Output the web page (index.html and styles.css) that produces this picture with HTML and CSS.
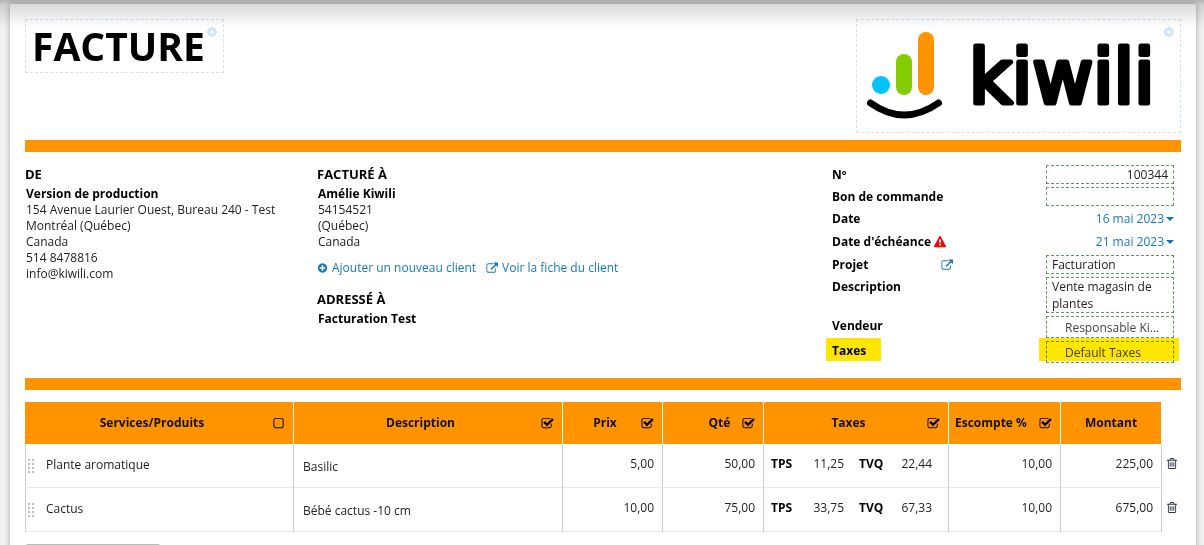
FILE: index.html
```html
<!DOCTYPE html>
<html lang="fr">
<head>
<meta charset="utf-8">
<title>Facture</title>
<link rel="stylesheet" href="styles.css">
</head>
<body>
<svg class="sprite" aria-hidden="true">
  <symbol id="cog" viewBox="0 0 1792 1792"><path d="M1152 896q0-106-75-181t-181-75-181 75-75 181 75 181 181 75 181-75 75-181zm512-109v222q0 12-8 23t-20 13l-185 28q-19 54-39 91 35 50 107 138 10 12 10 25t-9 23q-27 37-99 108t-94 71q-12 0-26-9l-138-108q-44 23-91 38-16 136-29 186-7 28-36 28h-222q-14 0-24.500-8.500t-11.500-21.500l-28-184q-49-16-90-37l-141 107q-10 9-25 9-14 0-25-11-126-114-165-168-7-10-7-23 0-12 8-23 15-21 51-66.500t54-70.500q-27-50-41-99l-183-27q-13-2-21-12.500t-8-23.500v-222q0-12 8-23t19-13l186-28q14-46 39-92-40-57-107-138-10-12-10-24 0-10 9-23 26-36 98.500-107.500t94.500-71.500q13 0 26 10l138 107q44-23 91-38 16-136 29-186 7-28 36-28h222q14 0 24.500 8.500t11.500 21.500l28 184q49 16 90 37l142-107q9-9 24-9 13 0 25 10 129 119 165 170 7 8 7 22 0 12-8 23-15 21-51 66.500t-54 70.500q26 50 41 98l183 28q13 2 21 12.500t8 23.500z"/></symbol>
  <symbol id="plus" viewBox="0 0 1792 1792"><path d="M1344 960v-128q0-26-19-45t-45-19h-256v-256q0-26-19-45t-45-19h-128q-26 0-45 19t-19 45v256h-256q-26 0-45 19t-19 45v128q0 26 19 45t45 19h256v256q0 26 19 45t45 19h128q26 0 45-19t19-45v-256h256q26 0 45-19t19-45zm320-64q0 209-103 385.500t-279.500 279.500-385.500 103-385.500-103-279.500-279.500-103-385.500 103-385.500 279.500-279.500 385.500-103 385.500 103 279.500 279.500 103 385.500z"/></symbol>
  <symbol id="external" viewBox="0 0 1792 1792"><path d="M1472 992v320q0 119-84.500 203.500t-203.500 84.500h-832q-119 0-203.500-84.500t-84.500-203.500v-832q0-119 84.500-203.500t203.500-84.500h704q14 0 23 9t9 23v64q0 14-9 23t-23 9h-704q-66 0-113 47t-47 113v832q0 66 47 113t113 47h832q66 0 113-47t47-113v-320q0-14 9-23t23-9h64q14 0 23 9t9 23zm320-864v512q0 26-19 45t-45 19-45-19l-176-176-652 652q-10 10-23 10t-23-10l-114-114q-10-10-10-23t10-23l652-652-176-176q-19-19-19-45t19-45 45-19h512q26 0 45 19t19 45z"/></symbol>
  <symbol id="warning" viewBox="0 0 1792 1792"><path d="M1024 1375v-190q0-14-9.500-23.500t-22.500-9.500h-192q-13 0-22.500 9.500t-9.500 23.500v190q0 14 9.500 23.500t22.500 9.500h192q13 0 22.500-9.500t9.500-23.500zm-2-374l18-459q0-12-10-19-13-11-24-11h-220q-11 0-24 11-10 7-10 21l17 457q0 10 10 16.500t24 6.500h185q14 0 23.500-6.500t10.500-16.500zm-14-934l768 1408q35 63-2 126-17 29-46.500 46t-63.500 17h-1536q-34 0-63.500-17t-46.500-46q-37-63-2-126l768-1408q17-31 47-49t65-18 65 18 47 49z"/></symbol>
  <symbol id="trash" viewBox="192 128 1408 1536"><path d="M704 736v576q0 14-9 23t-23 9h-64q-14 0-23-9t-9-23v-576q0-14 9-23t23-9h64q14 0 23 9t9 23zm256 0v576q0 14-9 23t-23 9h-64q-14 0-23-9t-9-23v-576q0-14 9-23t23-9h64q14 0 23 9t9 23zm256 0v576q0 14-9 23t-23 9h-64q-14 0-23-9t-9-23v-576q0-14 9-23t23-9h64q14 0 23 9t9 23zm128 724v-948h-896v948q0 22 7 40.500t14.500 27 10.500 8.500h832q3 0 10.500-8.500t14.500-27 7-40.500zm-672-1076h448l-48-117q-7-9-17-11h-317q-10 2-17 11zm928 32v64q0 14-9 23t-23 9h-96v948q0 83-47 143.500t-113 60.500h-832q-66 0-113-58.500t-47-141.500v-952h-96q-14 0-23-9t-9-23v-64q0-14 9-23t23-9h309l70-167q15-37 54-63t79-26h320q40 0 79 26t54 63l70 167h309q14 0 23 9t9 23z"/></symbol>
  <symbol id="grip" viewBox="0 0 6 14"><path d="M0 0h2v2H0zM4 0h2v2H4zM0 4h2v2H0zM4 4h2v2H4zM0 8h2v2H0zM4 8h2v2H4zM0 12h2v2H0zM4 12h2v2H4z"/></symbol>
</svg>
<div class="page">
  <main class="sheet">
    <header class="top">
      <div class="editable title-box">
        <h1>FACTURE</h1>
        <button class="gear" type="button" aria-label="Modifier le titre"><svg><use href="#cog"/></svg></button>
      </div>
      <div class="editable logo-box">
        <svg class="logo" viewBox="0 0 323 112" role="img" aria-label="kiwili">
          <circle cx="24" cy="65" r="9" fill="#00c3ff"/>
          <rect x="39" y="34" width="16" height="41" rx="8" fill="#84cc00"/>
          <rect x="61" y="12" width="16" height="63" rx="8" fill="#ff9400"/>
          <path d="M13.500 83Q47 107 81.500 83" fill="none" stroke="#000" stroke-width="7" stroke-linecap="round"/>
          <text class="wordmark" x="112" y="83">kiwili</text>
        </svg>
        <button class="gear" type="button" aria-label="Modifier le logo"><svg><use href="#cog"/></svg></button>
      </div>
    </header>

    <section class="details">
      <div class="party">
        <h2>DE</h2>
        <address><strong>Version de production</strong><br>154 Avenue Laurier Ouest, Bureau 240 - Test<br>Montréal (Québec)<br>Canada<br>514 8478816<br>info@kiwili.com</address>
      </div>
      <div class="party">
        <h2>FACTURÉ À</h2>
        <address><strong>Amélie Kiwili</strong><br>54154521<br>(Québec)<br>Canada</address>
        <nav class="links">
          <a href="#"><svg class="icon"><use href="#plus"/></svg>Ajouter un nouveau client</a>
          <a href="#"><svg class="icon wide"><use href="#external"/></svg>Voir la fiche du client</a>
        </nav>
        <h2>ADRESSÉ À</h2>
        <address><strong>Facturation Test</strong></address>
      </div>
      <form class="fields">
        <label for="no">Nº</label>
        <input class="box number" id="no" type="text" value="100344">
        <label for="po">Bon de commande</label>
        <input class="box" id="po" type="text">
        <label for="date">Date</label>
        <button class="date" id="date" type="button">16 mai 2023</button>
        <label for="due">Date d'échéance <svg class="warn"><use href="#warning"/></svg></label>
        <button class="date" id="due" type="button">21 mai 2023</button>
        <div class="with-link"><label for="project">Projet</label><a href="#" aria-label="Voir le projet"><svg class="icon wide"><use href="#external"/></svg></a></div>
        <input class="box" id="project" type="text" value="Facturation">
        <label for="desc">Description</label>
        <textarea class="box" id="desc" rows="2">Vente magasin de plantes</textarea>
        <label for="seller">Vendeur</label>
        <select class="box" id="seller"><option>Responsable Ki...</option></select>
        <div class="marked marked-label"><label for="tax">Taxes</label></div>
        <div class="marked marked-field"><select class="box" id="tax"><option>Default Taxes</option></select></div>
      </form>
    </section>

    <table class="items">
      <colgroup><col class="c-product"><col><col class="c-price"><col class="c-qty"><col class="c-tax"><col class="c-disc"><col class="c-total"><col class="c-del"></colgroup>
      <thead>
        <tr>
          <th><div class="head"><label for="h1">Services/Produits</label><input id="h1" type="checkbox"></div></th>
          <th><div class="head"><label for="h2">Description</label><input id="h2" type="checkbox" checked></div></th>
          <th><div class="head"><label for="h3">Prix</label><input id="h3" type="checkbox" checked></div></th>
          <th><div class="head head-end"><label for="h4">Qté</label><input id="h4" type="checkbox" checked></div></th>
          <th><div class="head"><label for="h5">Taxes</label><input id="h5" type="checkbox" checked></div></th>
          <th><div class="head head-start"><label for="h6">Escompte %</label><input id="h6" type="checkbox" checked></div></th>
          <th>Montant</th>
          <td></td>
        </tr>
      </thead>
      <tbody>
        <tr>
          <td><div class="product"><svg class="grip"><use href="#grip"/></svg><span>Plante aromatique</span></div></td>
          <td class="note">Basilic</td>
          <td class="num">5,00</td>
          <td class="num">50,00</td>
          <td class="taxes"><div><b>TPS</b><span>11,25</span></div><div><b>TVQ</b><span>22,44</span></div></td>
          <td class="num">10,00</td>
          <td class="num">225,00</td>
          <td class="del"><button type="button" aria-label="Supprimer"><svg><use href="#trash"/></svg></button></td>
        </tr>
        <tr>
          <td><div class="product"><svg class="grip"><use href="#grip"/></svg><span>Cactus</span></div></td>
          <td class="note">Bébé cactus -10 cm</td>
          <td class="num">10,00</td>
          <td class="num">75,00</td>
          <td class="taxes"><div><b>TPS</b><span>33,75</span></div><div><b>TVQ</b><span>67,33</span></div></td>
          <td class="num">10,00</td>
          <td class="num">675,00</td>
          <td class="del"><button type="button" aria-label="Supprimer"><svg><use href="#trash"/></svg></button></td>
        </tr>
      </tbody>
    </table>
    <button class="add" type="button" aria-label="Ajouter une ligne"></button>
  </main>
</div>
</body>
</html>
```
FILE: styles.css
```css
* { box-sizing: border-box; }

body {
  margin: 0;
  font-family: "Open Sans", "Noto Sans", sans-serif;
  font-size: 12px;
  line-height: 16px;
  color: #222;
}

button, input, select, textarea { font: inherit; color: inherit; }
button { padding: 0; border: 0; background: none; cursor: pointer; }
svg { fill: currentColor; }
a { color: #1779bd; text-decoration: none; }
.sprite { display: none; }

.page {
  position: relative;
  height: 100vh;
  overflow: hidden;
  padding: 4px 8px 0 10px;
  background: #f2f2f2;
}

/* shadow cast by the toolbar above */
.page::after {
  content: "";
  position: absolute;
  inset: 0 0 auto;
  height: 28px;
  background: linear-gradient(rgba(0, 0, 0, .26), rgba(0, 0, 0, .14) 5px, transparent);
  pointer-events: none;
}

.sheet {
  min-height: 100%;
  padding: 15px;
  background: #fff;
  border-radius: 2px;
  box-shadow: 0 0 6px rgba(0, 0, 0, .3);
}

.top {
  display: flex;
  justify-content: space-between;
  align-items: flex-start;
  padding-bottom: 7px;
}

.editable { position: relative; border: 1px dashed #cfe3f5; }
.title-box { padding: 0 18px 0 6px; }
h1 { margin: 0; font-size: 39px; line-height: 52px; color: #000; }
.gear { position: absolute; top: 6px; right: 5px; width: 12px; height: 12px; color: #cfe3f5; }
.gear svg { display: block; width: 12px; height: 12px; }
.logo { display: block; width: 323px; height: 112px; }
.wordmark {
  font-family: "DejaVu Sans", sans-serif;
  font-size: 74px;
  font-weight: 400;
  fill: #000;
  stroke: #000;
  stroke-width: 5px;
  stroke-linejoin: round;
}

.details {
  display: flex;
  border: solid #ff9400;
  border-width: 12px 0;
  padding: 13px 7px 15px 0;
  margin-bottom: 12px;
}
.party:first-child { width: 292px; }
.party:nth-child(2) { flex: 1; }
h2 { margin: 0; font-size: 13px; line-height: 18px; font-weight: 700; color: #000; }
address { margin-top: 3px; padding-left: 1px; font-style: normal; }
strong, b { color: #000; font-weight: 700; }
.links { display: flex; gap: 10px; margin: 10px 0 14px; }
.links a { display: flex; align-items: center; gap: 4px; }
.icon { width: 11px; height: 12px; }
.icon.wide { width: 12px; }

.fields {
  display: grid;
  grid-template-columns: 214px 128px;
  grid-template-rows: 19px 19px 20px 20px 19px 36px 22px 22px;
  row-gap: 3px;
}
.fields label { font-weight: 700; line-height: 19px; color: #000; }
.warn { width: 12px; height: 12px; color: #f00; vertical-align: -2px; }
.with-link { display: flex; justify-content: space-between; align-items: center; width: 121px; }
.with-link a { display: flex; }
.box {
  width: 100%;
  height: 100%;
  margin: 0;
  padding: 0 5px;
  border: 1px dashed #5f9a5f;
  border-radius: 0;
  background: none;
  resize: none;
  overflow: hidden;
}
textarea.box { line-height: 17px; }
select.box { appearance: none; padding: 2px 0 0 18px; color: #444; }
.number { text-align: right; }
.date {
  display: flex;
  align-items: center;
  justify-content: flex-end;
  gap: 2px;
  color: #1779bd;
}
.date::after {
  content: "";
  border: 4px solid transparent;
  border-top-color: #0b76bf;
  border-bottom: 0;
}

/* highlighter strokes over the tax row */
.marked { position: relative; }
.marked::after {
  content: "";
  position: absolute;
  top: -3px;
  bottom: 2px;
  background: #ffe600;
  mix-blend-mode: multiply;
  pointer-events: none;
}
.marked-label::after { left: -6px; width: 55px; }
.marked-field::after { left: -7px; right: -5px; }

.items { width: 100%; table-layout: fixed; border-spacing: 0; }
.c-product { width: 268px; }
.c-price { width: 100px; }
.c-qty { width: 101px; }
.c-tax { width: 185px; }
.c-disc { width: 112px; }
.c-total { width: 101px; }
.c-del { width: 20px; }
.items th, .items td { padding: 0; }
.items th { height: 42px; background: #ff9400; color: #111; border-left: 1px solid #fff; }
.items th:first-child { border-left-color: #ff9400; }
.head { display: flex; align-items: center; padding: 0 8px 0 6px; }
.head label { flex: 1; text-align: center; }
.head-end { padding-left: 34px; }
.head-start label { text-align: left; }
.head input {
  appearance: none;
  width: 13px;
  height: 13px;
  margin: 0;
  background: url("data:image/svg+xml,%3Csvg xmlns='http://www.w3.org/2000/svg' viewBox='0 0 1792 1792'%3E%3Cpath d='M1312 256h-832q-66 0-113 47t-47 113v832q0 66 47 113t113 47h832q66 0 113-47t47-113v-832q0-66-47-113t-113-47zm288 160v832q0 119-84.500 203.500t-203.500 84.500h-832q-119 0-203.500-84.500t-84.500-203.500v-832q0-119 84.500-203.500t203.500-84.500h832q119 0 203.500 84.500t84.500 203.500z'/%3E%3C/svg%3E");
}
.head input:checked {
  background-image: url("data:image/svg+xml,%3Csvg xmlns='http://www.w3.org/2000/svg' viewBox='0 0 1792 1792'%3E%3Cpath d='M1472 930v318q0 119-84.500 203.500t-203.500 84.500h-832q-119 0-203.500-84.500t-84.500-203.500v-832q0-119 84.500-203.500t203.500-84.500h832q63 0 117 25 15 7 18 23 3 17-9 29l-49 49q-10 10-23 10-3 0-9-2-23-6-45-6h-832q-66 0-113 47t-47 113v832q0 66 47 113t113 47h832q66 0 113-47t47-113v-254q0-13 9-22l64-64q10-10 23-10 6 0 12 3 20 8 20 29zm231-489l-814 814q-24 24-57 24t-57-24l-430-430q-24-24-24-57t24-57l110-110q24-24 57-24t57 24l263 263 647-647q24-24 57-24t57 24l110 110q24 24 24 57t-24 57z'/%3E%3C/svg%3E");
}
.items tbody td { height: 44px; border-left: 1px solid #ccc; border-bottom: 1px solid #e8e8e8; }
.items tbody .del { border-bottom: 0; padding: 0 0 6px 5px; color: #2b3440; }
.del button { display: block; }
.del svg { display: block; width: 10px; height: 11px; }
.product { display: flex; align-items: center; gap: 12px; }
.product span { padding-bottom: 2px; }
.grip { width: 6px; height: 14px; margin-left: 2px; color: #bbb; }
.items .note { padding: 2px 0 0 9px; }
.items .num { padding: 0 8px 4px 0; text-align: right; }
.items .taxes { padding: 0 14px 4px 7px; }
.taxes div { display: inline-flex; justify-content: space-between; width: 73px; }
.taxes div + div { margin-left: 15px; }

.add {
  display: block;
  width: 136px;
  height: 28px;
  margin-top: 12px;
  border: 1px solid #bbb;
  border-radius: 3px;
  background: #ddd;
}
```
